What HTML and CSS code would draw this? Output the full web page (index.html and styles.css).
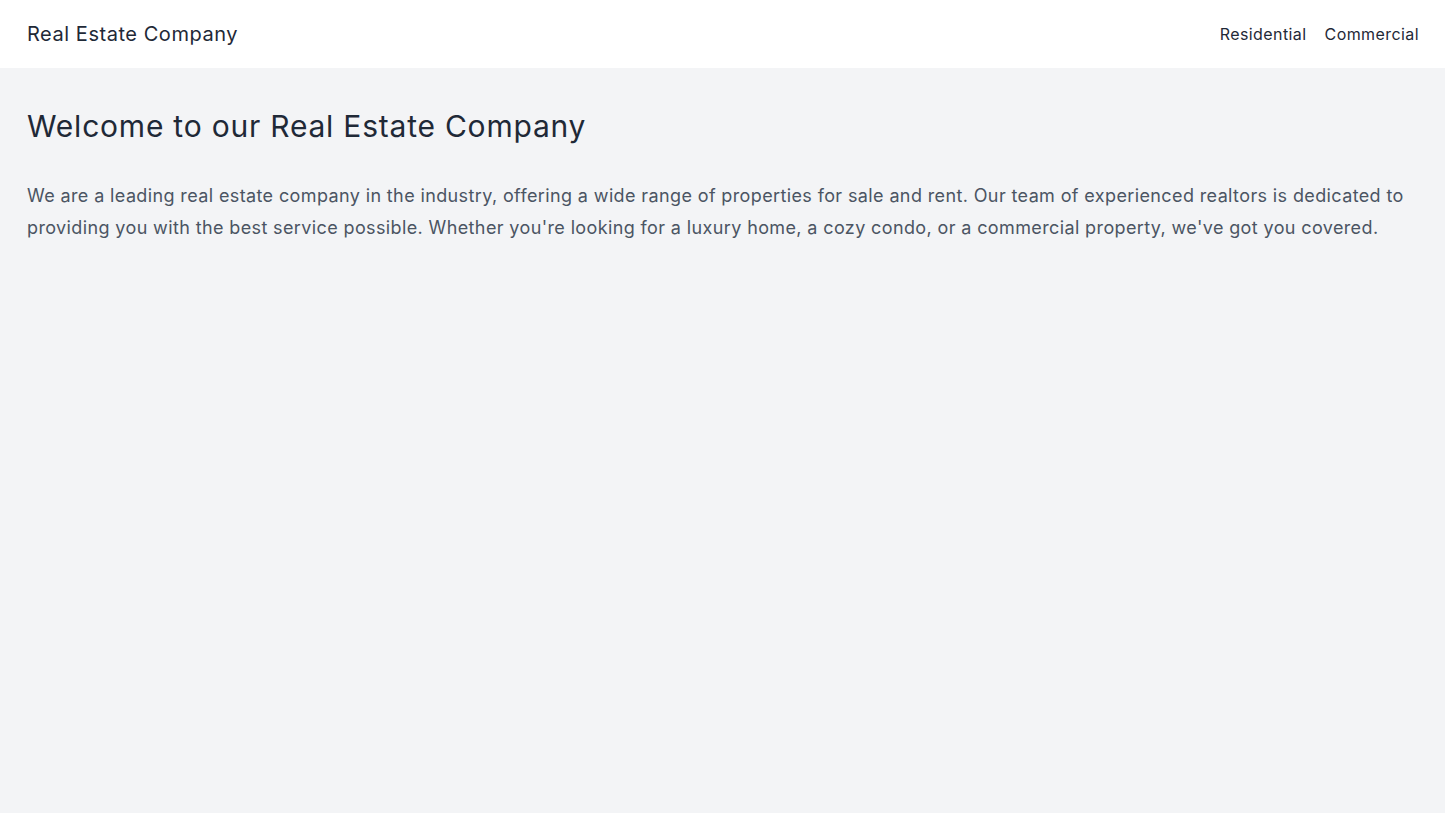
FILE: index.html
```html
<!DOCTYPE html>
<html lang="en">
<head>
<meta charset="utf-8">
<title>Real Estate Company</title>
<link rel="stylesheet" href="styles.css">
</head>
<body>
<header class="site-header">
  <div class="brand">Real Estate Company</div>
  <nav class="nav">
    <a href="#" class="nav-link">Residential</a>
    <a href="#" class="nav-link">Commercial</a>
  </nav>
</header>
<main class="main">
  <h1 class="title">Welcome to our Real Estate Company</h1>
  <p class="intro">We are a leading real estate company in the industry, offering a wide range of properties for sale and rent. Our team of experienced realtors is dedicated to providing you with the best service possible. Whether you're looking for a luxury home, a cozy condo, or a commercial property, we've got you covered.</p>
</main>
</body>
</html>
```
FILE: styles.css
```css
html, body {
  margin: 0;
  padding: 0;
}
body {
  background: #f3f4f6;
  font-family: Inter, "Liberation Sans", Arial, sans-serif;
  color: #1f2937;
  min-height: 813px;
}
.site-header {
  background: #ffffff;
  height: 68px;
  box-sizing: border-box;
  padding: 0 26px 0 27px;
  display: flex;
  align-items: center;
  justify-content: space-between;
}
.brand {
  font-size: 20px;
  line-height: 28px;
  letter-spacing: 0.027em;
  color: #1f2937;
}
.nav {
  display: flex;
  gap: 18px;
}
.nav-link {
  font-size: 16px;
  line-height: 24px;
  letter-spacing: 0.026em;
  color: #1f2937;
  text-decoration: none;
}
.main {
  padding: 40px 24px 40px 27px;
}
.title {
  margin: 0 0 36px;
  font-size: 30px;
  line-height: 36px;
  font-weight: 400;
  letter-spacing: 0.026em;
  color: #1f2937;
}
.intro {
  margin: 0;
  font-size: 18px;
  line-height: 32px;
  letter-spacing: 0.021em;
  color: #4b5563;
}
```
